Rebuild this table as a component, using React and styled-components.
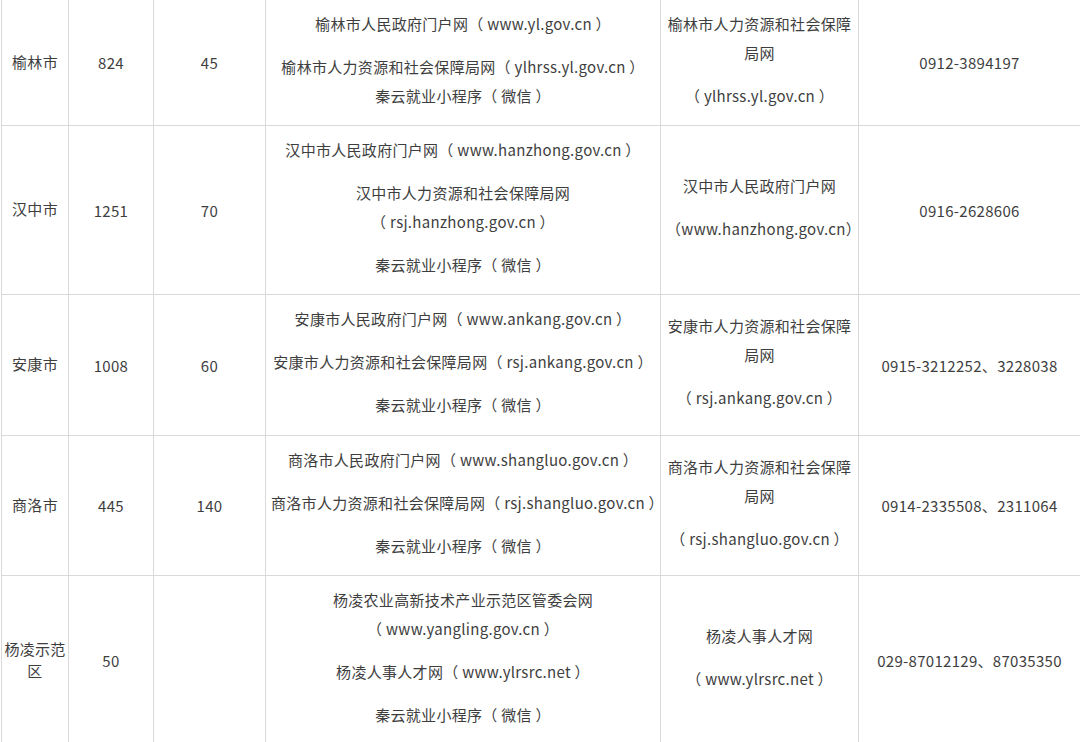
import React from "react";
import styled, { createGlobalStyle } from "styled-components";

const GlobalStyle = createGlobalStyle`
  html, body {
    margin: 0;
    padding: 0;
    background: #fff;
    overflow: hidden;
  }
  body {
    font-family: "Noto Sans CJK SC", "Noto Sans", sans-serif;
    color: #3e3e3e;
  }
`;

const StyledTable = styled.table`
  border-collapse: collapse;
  table-layout: fixed;
  width: 1080px;
  margin: -1px 0 0 1px;
  font-size: 15px;
  letter-spacing: 0.3px;
`;

const StyledRow = styled.tr`
  height: ${({ h }) => h}px;
`;

const StyledCell = styled.td`
  border: 1px solid #d9d9d9;
  padding: 0 5px;
  text-align: center;
  vertical-align: middle;
  word-break: break-all;
`;

const StyledTextCell = styled(StyledCell)`
  padding-bottom: 7px;
`;

const StyledCityCell = styled(StyledCell)`
  padding: 0 2px 2px;
  line-height: 22px;
`;

const StyledLine = styled.p`
  margin: 0;
  line-height: 29px;
  white-space: nowrap;

  & + & {
    margin-top: 14px;
  }
`;

const widths = [67, 85, 112, 395, 198, 222];

const rows = [
  {
    h: 126,
    city: "榆林市",
    a: "824",
    b: "45",
    sites: [
      ["榆林市人民政府门户网（ www.yl.gov.cn ）"],
      ["榆林市人力资源和社会保障局网（ ylhrss.yl.gov.cn ）", "秦云就业小程序（ 微信 ）"],
    ],
    bureau: [["榆林市人力资源和社会保障", "局网"], ["（ ylhrss.yl.gov.cn ）"]],
    phone: "0912-3894197",
  },
  {
    h: 169,
    city: "汉中市",
    a: "1251",
    b: "70",
    sites: [
      ["汉中市人民政府门户网（ www.hanzhong.gov.cn ）"],
      ["汉中市人力资源和社会保障局网", "（ rsj.hanzhong.gov.cn ）"],
      ["秦云就业小程序（ 微信 ）"],
    ],
    bureau: [["汉中市人民政府门户网"], ["（www.hanzhong.gov.cn）"]],
    phone: "0916-2628606",
  },
  {
    h: 141,
    city: "安康市",
    a: "1008",
    b: "60",
    sites: [
      ["安康市人民政府门户网（ www.ankang.gov.cn ）"],
      ["安康市人力资源和社会保障局网（ rsj.ankang.gov.cn ）"],
      ["秦云就业小程序（ 微信 ）"],
    ],
    bureau: [["安康市人力资源和社会保障", "局网"], ["（ rsj.ankang.gov.cn ）"]],
    phone: "0915-3212252、3228038",
  },
  {
    h: 140,
    city: "商洛市",
    a: "445",
    b: "140",
    sites: [
      ["商洛市人民政府门户网（ www.shangluo.gov.cn ）"],
      ["商洛市人力资源和社会保障局网（ rsj.shangluo.gov.cn ）"],
      ["秦云就业小程序（ 微信 ）"],
    ],
    bureau: [["商洛市人力资源和社会保障", "局网"], ["（ rsj.shangluo.gov.cn ）"]],
    phone: "0914-2335508、2311064",
  },
  {
    h: 170,
    city: "杨凌示范区",
    a: "50",
    b: "",
    sites: [
      ["杨凌农业高新技术产业示范区管委会网", "（ www.yangling.gov.cn ）"],
      ["杨凌人事人才网（ www.ylrsrc.net ）"],
      ["秦云就业小程序（ 微信 ）"],
    ],
    bureau: [["杨凌人事人才网"], ["（ www.ylrsrc.net ）"]],
    phone: "029-87012129、87035350",
  },
];

const Lines = ({ items }) =>
  items.map((group, i) => (
    <StyledLine key={i}>
      {group.map((text, j) => (
        <React.Fragment key={j}>
          {j > 0 && <br />}
          {text}
        </React.Fragment>
      ))}
    </StyledLine>
  ));

const App = () => (
  <>
    <GlobalStyle />
    <StyledTable>
      <colgroup>
        {widths.map((w, i) => (
          <col key={i} style={{ width: w }} />
        ))}
      </colgroup>
      <tbody>
        {rows.map((row) => (
          <StyledRow key={row.city} h={row.h}>
            <StyledCityCell>{row.city}</StyledCityCell>
            <StyledCell>{row.a}</StyledCell>
            <StyledCell>{row.b}</StyledCell>
            <StyledTextCell>
              <Lines items={row.sites} />
            </StyledTextCell>
            <StyledTextCell>
              <Lines items={row.bureau} />
            </StyledTextCell>
            <StyledCell>{row.phone}</StyledCell>
          </StyledRow>
        ))}
      </tbody>
    </StyledTable>
  </>
);

export default App;
